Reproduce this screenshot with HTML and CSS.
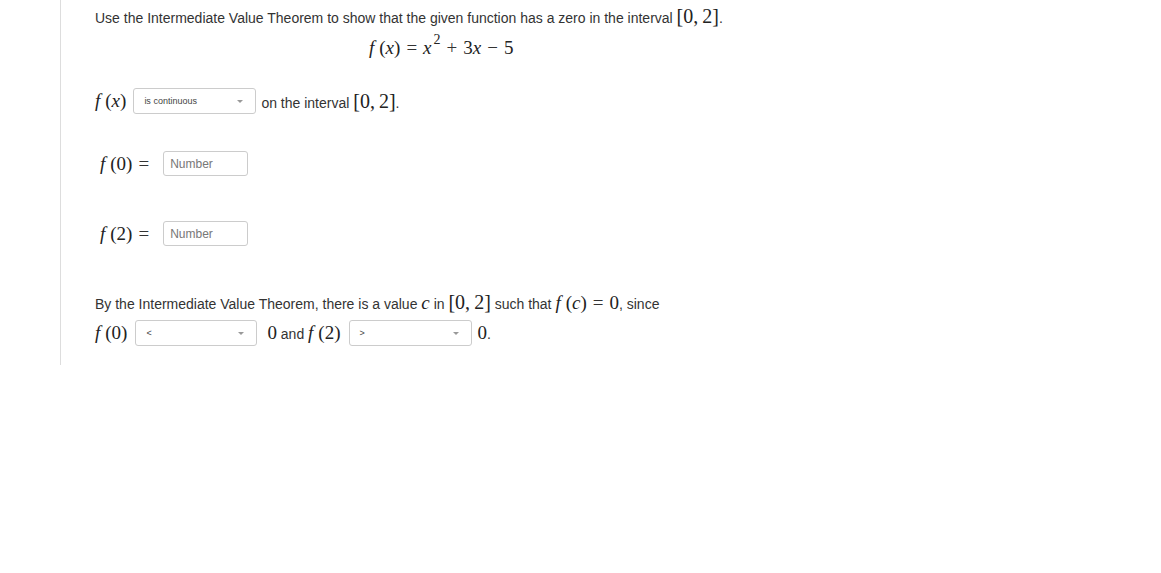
FILE: index.html
```html
<!DOCTYPE html>
<html>
<head>
<meta charset="utf-8">
<link rel="stylesheet" href="styles.css">
</head>
<body>
<div class="panel">
  <div class="line intro">Use the Intermediate Value Theorem to show that the given function has a zero in the interval <span class="m big">[0,<span class="sp"></span>2]</span>.</div>
  <div class="line formula"><span class="m"><i class="fn">f</i>(<i>x</i>)<span class="op">=</span><i>x</i><sup>2</sup><span class="op">+</span>3<i>x</i><span class="op">−</span>5</span></div>

  <div class="row r1">
    <span class="m"><i class="fn">f</i>(<i>x</i>)</span>
    <div class="sel w123"><span class="sel-text">is continuous</span><span class="caret"></span></div>
    <span class="after">on the interval <span class="m big">[0,<span class="sp"></span>2]</span>.</span>
  </div>

  <div class="row r2">
    <span class="m"><i class="fn">f</i>(0)<span class="op">=</span></span>
    <div class="inp">Number</div>
  </div>

  <div class="row r3">
    <span class="m"><i class="fn">f</i>(2)<span class="op">=</span></span>
    <div class="inp">Number</div>
  </div>

  <div class="line para">By the Intermediate Value Theorem, there is a value <span class="m"><i>c</i></span> in <span class="m big">[0,<span class="sp"></span>2]</span> such that <span class="m"><i class="fn">f</i>(<i>c</i>)<span class="op">=</span>0</span>, since</div>
  <div class="row r4">
    <span class="m"><i class="fn">f</i>(0)</span>
    <div class="sel w122"><span class="sel-text">&lt;</span><span class="caret"></span></div>
    <span class="mid"><span class="m">0</span> and <span class="m"><i class="fn">f</i>(2)</span></span>
    <div class="sel w123"><span class="sel-text">&gt;</span><span class="caret"></span></div>
    <span class="end"><span class="m">0</span>.</span>
  </div>
</div>
</body>
</html>
```

FILE: styles.css
```css
html, body {
  margin: 0;
  padding: 0;
  background: #fff;
}
body {
  font-family: "Liberation Sans", Arial, sans-serif;
  font-size: 14px;
  color: #333;
}
.panel {
  margin-left: 60px;
  border-left: 1px solid #ddd;
  padding-left: 34px;
  height: 365px;
  box-sizing: border-box;
  padding-top: 5px;
}
.line {
  line-height: 22px;
  white-space: nowrap;
}
.m {
  font-family: "Liberation Serif", "Times New Roman", serif;
  font-size: 19px;
  color: #222;
}
.m i {
  font-style: italic;
}
.m i.fn {
  margin-right: 5px;
}
.m sup {
  font-size: 14px;
  line-height: 0;
  position: relative;
  top: -3px;
  margin-left: 2px;
}
.m .op {
  color: #333;
  margin: 0 6px;
}
.sp {
  display: inline-block;
  width: 4px;
}
.big {
  font-size: 20px;
}
.formula {
  margin-top: 8px;
  padding-left: 274px;
}
.row {
  display: flex;
  align-items: center;
  white-space: nowrap;
}
.r1 {
  margin-top: 28px;
  gap: 7px;
}
.r1 .after {
  margin-left: -2px;
}
.r2 {
  margin-top: 37px;
  padding-left: 5px;
  gap: 8px;
}
.r3 {
  margin-top: 45px;
  padding-left: 5px;
  gap: 8px;
}
.sel {
  position: relative;
  height: 26px;
  box-sizing: border-box;
  border: 1px solid #ccc;
  border-radius: 3px;
  background: #fff;
  display: flex;
  align-items: center;
  padding-left: 10px;
}
.w123 { width: 123px; }
.w122 { width: 122px; }
.sel-text {
  font-size: 9px;
  color: #444;
}
.caret {
  position: absolute;
  right: 12px;
  top: 11px;
  width: 0;
  height: 0;
  border-left: 3px solid transparent;
  border-right: 3px solid transparent;
  border-top: 3px solid #999;
}
.inp {
  width: 85px;
  height: 25px;
  box-sizing: border-box;
  border: 1px solid #ccc;
  border-radius: 3px;
  font-size: 12px;
  color: #777;
  display: flex;
  align-items: center;
  padding-left: 6px;
}
.para {
  margin-top: 45px;
}
.r4 {
  margin-top: 5px;
  gap: 8px;
}
.r4 .mid {
  margin-left: 2px;
}
.r4 .end {
  margin-left: -2px;
}
```
